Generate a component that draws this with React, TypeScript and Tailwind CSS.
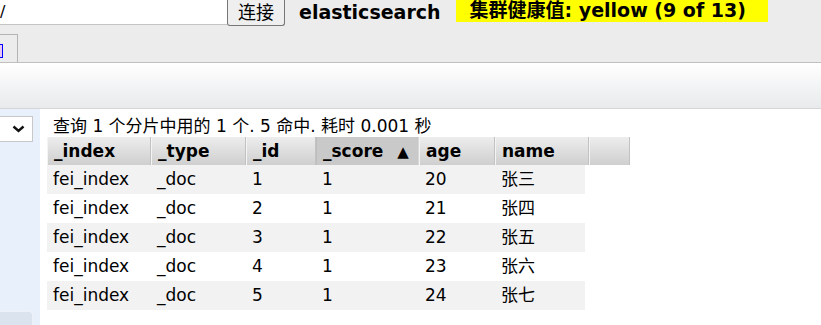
import React from "react";

const rows = [
  ["fei_index", "_doc", "1", "1", "20", "张三"],
  ["fei_index", "_doc", "2", "1", "21", "张四"],
  ["fei_index", "_doc", "3", "1", "22", "张五"],
  ["fei_index", "_doc", "4", "1", "23", "张六"],
  ["fei_index", "_doc", "5", "1", "24", "张七"],
];

const widths = ["w-[104px]", "w-[95px]", "w-[70px]", "w-[103px]", "w-[76px]", "w-[90px]"];

export default function App() {
  const font = { fontFamily: '"DejaVu Sans", "Noto Sans CJK SC", sans-serif' };
  return (
    <div className="w-[821px] h-[325px] overflow-hidden bg-[#ececec] text-black" style={font}>
      {/* top bar */}
      <div className="flex items-start h-[26px]">
        <div className="w-[227px] h-[25px] bg-white border-b border-[#c4c4c4] text-[16px] leading-[24px] pl-0">/</div>
        <button className="w-[58px] h-[26px] bg-[#efefef] border border-[#767676] border-t-0 rounded-b-[3px] text-[18px] leading-[24px]">连接</button>
        <div className="ml-[14px] text-[19px] font-bold leading-[24px]">elasticsearch</div>
        <div className="ml-[15px] h-[22px] bg-[#ffff00] pl-[14px] w-[312px] text-[19px] font-bold leading-[21px] whitespace-nowrap">集群健康值: yellow (9 of 13)</div>
      </div>
      {/* tabs */}
      <div className="h-[37px] flex items-end border-b border-[#c0c0c0]">
        <div className="w-[18px] h-[28px] border border-b-0 border-l-0 border-[#b4b4b4] flex items-center">
          <div className="w-[3px] h-[14px] border border-l-0 border-[#0000ff] bg-[#e8c8f0] mt-[4px]"></div>
        </div>
      </div>
      {/* toolbar */}
      <div className="h-[46px] bg-gradient-to-b from-[#ffffff] to-[#e8eaeb] border-b border-[#d4d6d8]"></div>
      {/* body */}
      <div className="flex h-[230px] bg-white">
        <div className="w-[40px] bg-[#e8f0fc] flex flex-col pt-[7px]">
          <div className="w-[33px] h-[26px] bg-white border border-[#c8c8c8] border-l-0 flex items-center justify-end pr-[7px]">
            <svg width="13" height="8" viewBox="0 0 13 8"><path d="M1.5 1.5 L6.5 6 L11.5 1.5" fill="none" stroke="#111" strokeWidth="2.4" /></svg>
          </div>
          <div className="mt-[169px] w-[33px] h-[20px] bg-[#dbe3ee] rounded-tr-[4px] border-r border-t border-[#eef2f7]"></div>
        </div>
        <div className="pl-[7px]">
          <div className="pl-[6px] text-[17px] leading-[18px] mt-[8px] h-[20px] whitespace-nowrap">查询 1 个分片中用的 1 个. 5 命中. 耗时 0.001 秒</div>
          <div className="flex h-[28px] text-[17px] font-bold">
            {["_index", "_type", "_id", "_score", "age", "name"].map((h, i) => (
              <div
                key={h}
                className={`${i === 5 ? "w-[94px]" : widths[i]} h-[28px] leading-[28px] pl-[6px] border-l border-r whitespace-nowrap ${
                  i === 3
                    ? "bg-[#c9c9c9] border-l-[#bdbdbd] border-r-[#d8d8d8]"
                    : "bg-gradient-to-b from-[#ededed] to-[#cfcfcf] border-l-[#f4f4f4] border-r-[#c2c2c2]"
                }`}
              >
                {h}
                {i === 3 && <span className="ml-[14px] text-[15px]">▲</span>}
              </div>
            ))}
            <div className="w-[41px] h-[28px] bg-gradient-to-b from-[#ededed] to-[#cfcfcf] border-l border-r border-l-[#f4f4f4] border-r-[#c2c2c2]"></div>
          </div>
          {rows.map((r, ri) => (
            <div key={ri} className={`flex h-[29px] w-[538px] text-[17px] leading-[29px] ${ri % 2 === 0 ? "bg-[#f2f2f2]" : "bg-white"}`}>
              {r.map((c, ci) => (
                <div key={ci} className={`${widths[ci]} pl-[6px] whitespace-nowrap`}>{c}</div>
              ))}
            </div>
          ))}
        </div>
      </div>
    </div>
  );
}
